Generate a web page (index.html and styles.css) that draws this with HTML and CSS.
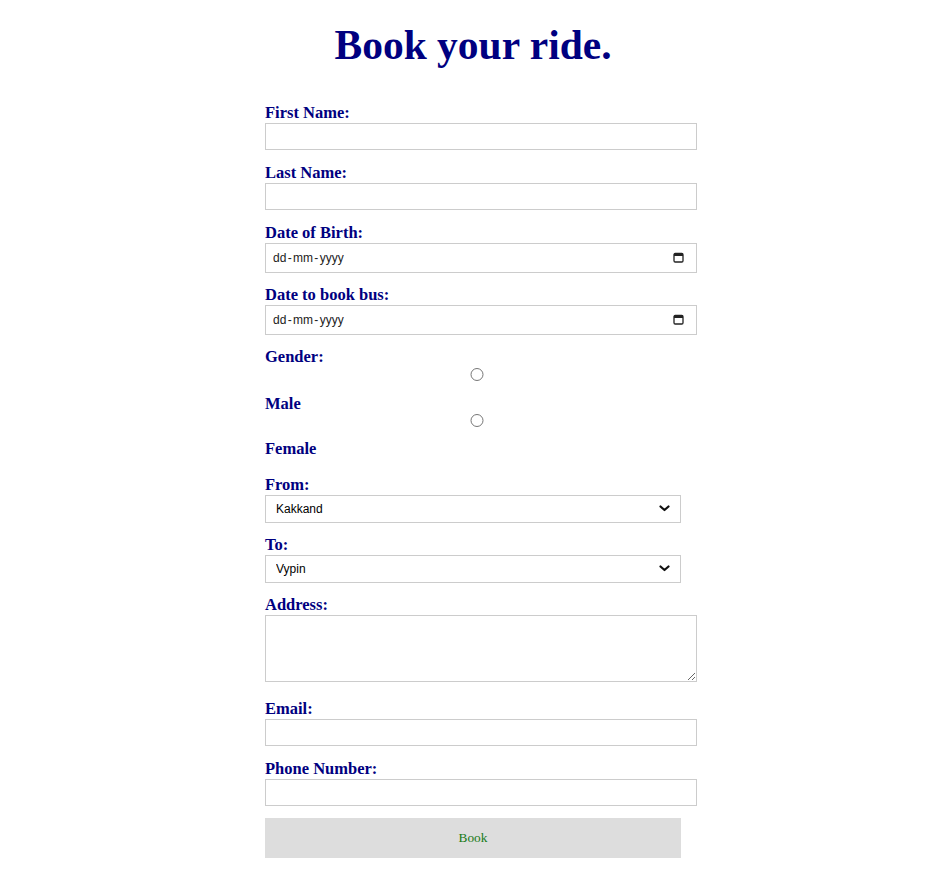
FILE: index.html
```html
<!DOCTYPE html>
<html lang="en">
<head>
<meta charset="utf-8">
<title>Book your ride</title>
<link rel="stylesheet" href="styles.css">
</head>
<body>
<div class="container">
  <h1 class="title">Book your ride.</h1>
  <form class="form">
    <label class="label" for="fname">First Name:</label>
    <input class="field" type="text" id="fname">
    <label class="label" for="lname">Last Name:</label>
    <input class="field" type="text" id="lname">
    <label class="label" for="dob">Date of Birth:</label>
    <div class="date-wrap">
      <input class="field date" type="text" id="dob" placeholder="dd - mm - yyyy">
      <svg class="cal" width="11" height="11" viewBox="0 0 11 11"><rect x="1" y="1.5" width="9" height="8.5" rx="1.2" fill="none" stroke="#222" stroke-width="1.3"/><rect x="1" y="1.5" width="9" height="2.5" fill="#222"/></svg>
    </div>
    <label class="label" for="dbus">Date to book bus:</label>
    <div class="date-wrap">
      <input class="field date" type="text" id="dbus" placeholder="dd - mm - yyyy">
      <svg class="cal" width="11" height="11" viewBox="0 0 11 11"><rect x="1" y="1.5" width="9" height="8.5" rx="1.2" fill="none" stroke="#222" stroke-width="1.3"/><rect x="1" y="1.5" width="9" height="2.5" fill="#222"/></svg>
    </div>
    <label class="label">Gender:</label>
    <input class="radio radio-first" type="radio" name="gender" id="male">
    <label class="label" for="male">Male</label>
    <input class="radio" type="radio" name="gender" id="female">
    <label class="label label-last" for="female">Female</label>
    <label class="label" for="from">From:</label>
    <div class="select-wrap">
      <select class="select" id="from"><option>Kakkand</option><option>Vypin</option></select>
      <svg class="chev" width="11" height="7" viewBox="0 0 11 7"><path d="M1.5 1.5 L5.5 5 L9.5 1.5" fill="none" stroke="#111" stroke-width="2.2" stroke-linecap="round" stroke-linejoin="round"/></svg>
    </div>
    <label class="label" for="to">To:</label>
    <div class="select-wrap">
      <select class="select" id="to"><option>Vypin</option><option>Kakkand</option></select>
      <svg class="chev" width="11" height="7" viewBox="0 0 11 7"><path d="M1.5 1.5 L5.5 5 L9.5 1.5" fill="none" stroke="#111" stroke-width="2.2" stroke-linecap="round" stroke-linejoin="round"/></svg>
    </div>
    <label class="label" for="addr">Address:</label>
    <textarea class="field area" id="addr"></textarea>
    <label class="label" for="email">Email:</label>
    <input class="field" type="email" id="email">
    <label class="label" for="phone">Phone Number:</label>
    <input class="field field-last" type="tel" id="phone">
    <button class="btn" type="submit">Book</button>
  </form>
</div>
</body>
</html>
```
FILE: styles.css
```css
body {
  margin: 0;
  background: #fff;
  font-family: "Liberation Serif", "Times New Roman", serif;
}
.container {
  width: 416px;
  margin: 0 auto;
  padding: 0 0 0 20px;
}
.title {
  color: #000080;
  font-size: 41.5px;
  font-weight: bold;
  text-align: center;
  margin: 21px 0 35px;
  line-height: 48px;
}
.form {
  display: block;
}
.label {
  display: block;
  color: #000080;
  font-weight: bold;
  font-size: 16.5px;
  line-height: 17px;
  padding-bottom: 2px;
}
.label-last {
  margin-bottom: 17px;
}
.field {
  display: block;
  box-sizing: border-box;
  width: calc(100% + 16px);
  height: 27px;
  padding: 0 7px;
  border: 1px solid #ccc;
  margin: 0 0 14px;
  font-family: "Liberation Sans", Arial, sans-serif;
  font-size: 13.33px;
  background: #fff;
  color: #000;
  outline: none;
}
.field-last {
  margin-bottom: 12px;
}
.date-wrap {
  position: relative;
  width: calc(100% + 16px);
  margin-bottom: 13px;
}
.date {
  width: 100%;
  height: 30px;
  margin: 0;
  padding: 0 7px;
  font-size: 12px;
  word-spacing: -2px;
}
.date::placeholder {
  color: #222;
  opacity: 1;
  word-spacing: -2px;
}
.cal {
  position: absolute;
  right: 13px;
  top: 9px;
}
.area {
  height: 67px;
  resize: vertical;
  margin-bottom: 18px;
  padding: 2px 7px;
}
.radio {
  display: block;
  width: 100%;
  height: 13px;
  margin: 0 3px 13px 4px;
}
.radio-first {
  margin-top: 1px;
  margin-bottom: 14px;
}
.select-wrap {
  position: relative;
  width: 100%;
  margin-bottom: 13px;
}
.select {
  display: block;
  box-sizing: border-box;
  width: 100%;
  height: 28px;
  padding: 0 10px;
  border: 1px solid #ccc;
  margin: 0;
  font-family: "Liberation Sans", Arial, sans-serif;
  font-size: 12px;
  background: #fff;
  color: #000;
  appearance: none;
  -webkit-appearance: none;
  border-radius: 0;
  outline: none;
}
.chev {
  position: absolute;
  right: 11px;
  top: 10px;
  pointer-events: none;
}
.btn {
  display: block;
  width: 100%;
  height: 40px;
  margin-top: 12px;
  border: none;
  background: #ddd;
  color: #177a17;
  font-family: "Liberation Serif", "Times New Roman", serif;
  font-size: 13.33px;
}
```
